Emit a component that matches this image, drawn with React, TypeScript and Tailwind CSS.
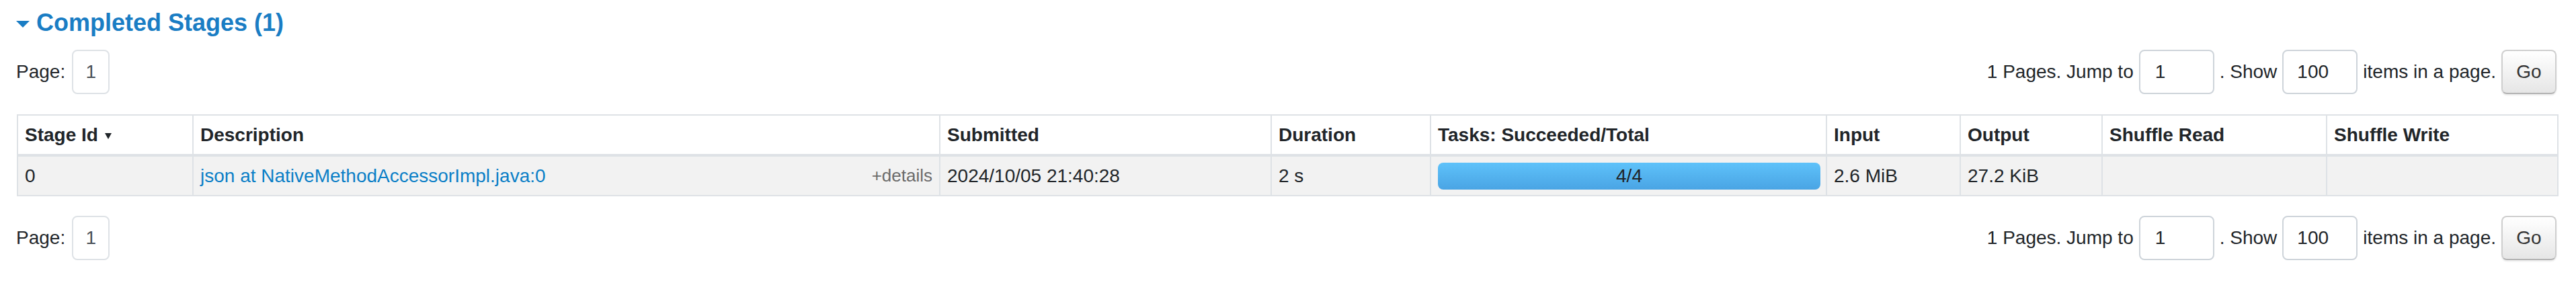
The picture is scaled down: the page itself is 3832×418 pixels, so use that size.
import React from "react";

const font = { fontFamily: '"Liberation Sans", Arial, sans-serif' };

const Pager = () => (
  <div className="flex items-center justify-between h-[66px] pl-[24px] pr-[29px]">
    <div className="flex items-center gap-[10px]">
      <span>Page:</span>
      <div className="w-[56px] h-[66px] border-2 border-[#dee2e6] rounded-[8px] flex items-center justify-center text-[#495057]">
        1
      </div>
    </div>
    <div className="flex items-center gap-[8px]">
      <span>1 Pages. Jump to</span>
      <input
        readOnly
        value="1"
        className="w-[112px] h-[66px] border-2 border-[#ced4da] rounded-[8px] px-[22px] text-[#212529] outline-none"
      />
      <span>. Show</span>
      <input
        readOnly
        value="100"
        className="w-[112px] h-[66px] border-2 border-[#ced4da] rounded-[8px] px-[20px] text-[#212529] outline-none"
      />
      <span>items in a page.</span>
      <button className="w-[82px] h-[66px] border-2 border-[#cfcfcf] border-b-[#b3b3b3] rounded-[8px] bg-gradient-to-b from-white to-[#e6e6e6] shadow-[0_2px_2px_rgba(0,0,0,0.08)] text-[#333]">
        Go
      </button>
    </div>
  </div>
);

const headers = [
  "Stage Id",
  "Description",
  "Submitted",
  "Duration",
  "Tasks: Succeeded/Total",
  "Input",
  "Output",
  "Shuffle Read",
  "Shuffle Write",
];
const widths = [261, 1111, 493, 237, 589, 199, 211, 334, 344];

export default function App() {
  return (
    <div className="w-[3832px] h-[418px] bg-white text-[28px] text-[#212529]" style={font}>
      <div className="flex items-center h-[44px] mt-[12px] pl-[24px] gap-[10px] text-[#1a7dc4]">
        <span className="w-0 h-0 border-l-[10px] border-r-[10px] border-t-[10px] border-l-transparent border-r-transparent border-t-[#1a7dc4] mt-[4px]" />
        <h4 className="text-[36px] font-bold leading-[44px]">Completed Stages (1)</h4>
      </div>

      <div className="mt-[18px]">
        <Pager />
      </div>

      <div className="pl-[25px] pr-[28px] mt-[30px]">
        <table className="table-fixed border-collapse w-[3779px]">
          <colgroup>
            {widths.map((w, i) => (
              <col key={i} style={{ width: w }} />
            ))}
          </colgroup>
          <thead>
            <tr className="h-[60px]">
              {headers.map((h, i) => (
                <th
                  key={h}
                  className="border-2 border-b-4 border-[#dee2e6] px-[10px] text-left font-bold align-middle"
                >
                  {h}
                  {i === 0 && (
                    <span className="inline-block ml-[10px] align-middle w-0 h-0 border-l-[5px] border-r-[5px] border-t-[9px] border-l-transparent border-r-transparent border-t-[#212529]" />
                  )}
                </th>
              ))}
            </tr>
          </thead>
          <tbody>
            <tr className="h-[60px] bg-[#f2f2f2]">
              <td className="border-2 border-[#dee2e6] px-[10px]">0</td>
              <td className="border-2 border-[#dee2e6] px-[10px]">
                <div className="flex items-center justify-between">
                  <a className="text-[#0b7fc7]">json at NativeMethodAccessorImpl.java:0</a>
                  <span className="text-[26px] text-[#6b6b6b] pr-[0px]">+details</span>
                </div>
              </td>
              <td className="border-2 border-[#dee2e6] px-[10px]">2024/10/05 21:40:28</td>
              <td className="border-2 border-[#dee2e6] px-[10px]">2 s</td>
              <td className="border-2 border-[#dee2e6] pl-[10px] pr-[8px]">
                <div className="h-[40px] rounded-[8px] bg-gradient-to-b from-[#5ec2fa] to-[#4aa4e4] flex items-center justify-center text-[#212529]">
                  4/4
                </div>
              </td>
              <td className="border-2 border-[#dee2e6] px-[10px]">2.6 MiB</td>
              <td className="border-2 border-[#dee2e6] px-[10px]">27.2 KiB</td>
              <td className="border-2 border-[#dee2e6] px-[10px]"></td>
              <td className="border-2 border-[#dee2e6] px-[10px]"></td>
            </tr>
          </tbody>
        </table>
      </div>

      <div className="mt-[29px]">
        <Pager />
      </div>
    </div>
  );
}
